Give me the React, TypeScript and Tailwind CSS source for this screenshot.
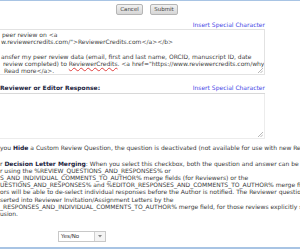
import React from "react";

const font = { fontFamily: '"DejaVu Sans", Verdana, sans-serif' };

export default function App() {
  return (
    <div
      className="w-[300px] h-[250px] overflow-hidden bg-white relative text-[6px] leading-[7.2px] text-[#3a3a3a]"
      style={font}
    >
      <div className="h-[1px] bg-[#a8c4e4]" />
      {/* buttons */}
      <div className="flex gap-[7px] pl-[116px] pt-[3px]">
        <button className="w-[27px] h-[11px] rounded-[2px] border border-[#b5b5b5] bg-gradient-to-b from-[#f2f2f2] to-[#d6d6d6] text-[5.5px] leading-[9px] text-[#444]">
          Cancel
        </button>
        <button className="w-[28px] h-[11px] rounded-[2px] border border-[#b5b5b5] bg-gradient-to-b from-[#f2f2f2] to-[#d6d6d6] text-[5.5px] leading-[9px] text-[#444]">
          Submit
        </button>
      </div>
      {/* link */}
      <div className="w-[265px] flex justify-end pt-[6px] h-[14px] text-[#4646e6]">
        <span>Insert Special Character</span>
      </div>
      {/* textarea 1 */}
      <div className="-ml-[3px] w-[268px] h-[46px] border border-[#e2e2e2] bg-white relative pl-[3px] pt-[1px] whitespace-nowrap overflow-hidden text-[#404040]">
        <div className="pl-[1px]">peer review on &lt;a</div>
        <div>w.reviewercredits.com/"&gt;ReviewerCredits.com&lt;/a&gt;&lt;/b&gt;</div>
        <div>&nbsp;</div>
        <div>ansfer my peer review data (email, first and last name, ORCID, manuscript ID, date</div>
        <div className="pl-[2px]">
          review completed) to{" "}
          <span className="underline decoration-wavy decoration-[#e04040] decoration-[0.7px]">ReviewerCredits</span>. &lt;a href="https://www.reviewercredits.com/why-
        </div>
        <div className="pl-[3px]">Read more&lt;/a&gt;.</div>
        <Grip />
      </div>
      {/* label row */}
      <div className="w-[265px] flex justify-between items-end pt-[9px] pb-[2px] border-b border-[#d8d8d8]">
        <span className="font-bold text-[#1c2440]">Reviewer or Editor Response:</span>
        <span className="text-[#4646e6]">Insert Special Character</span>
      </div>
      {/* textarea 2 */}
      <div className="-ml-[3px] w-[268px] h-[45px] border-r border-b border-[#ececec] bg-white relative">
        <Grip />
      </div>
      {/* notes */}
      <div className="pt-[5px] whitespace-nowrap">
        <div>
          you <b className="text-[#1c2440]">Hide</b> a Custom Review Question, the question is deactivated (not available for use with new Reviewer
        </div>
        <div>&nbsp;</div>
        <div className="pt-[1px]">
          r <b className="text-[#1c2440]">Decision Letter Merging</b>: When you select this checkbox, both the question and answer can be merged
        </div>
        <div>r using the %REVIEW_QUESTIONS_AND_RESPONSES% or</div>
        <div>S_AND_INDIVIDUAL_COMMENTS_TO_AUTHOR% merge fields (for Reviewers) or the</div>
        <div>UESTIONS_AND_RESPONSES% and %EDITOR_RESPONSES_AND_COMMENTS_TO_AUTHOR% merge fields</div>
        <div>ors will be able to de-select individual responses before the Author is notified. The Reviewer questions</div>
        <div>serted into Reviewer Invitation/Assignment Letters by the</div>
        <div>_RESPONSES_AND_INDIVIDUAL_COMMENTS_TO_AUTHOR% merge field, for those reviews explicitly selected</div>
        <div>usion.</div>
      </div>
      {/* select */}
      <div className="pl-[58px] pt-[14px]">
        <div className="w-[48px] h-[11px] border border-[#c8c8c8] flex bg-white">
          <div className="flex-1 pl-[2px] text-[5.5px] leading-[9px] text-[#333]">Yes/No</div>
          <div className="w-[11px] border-l border-[#d0d0d0] bg-[#f4f4f4] flex items-center justify-center">
            <svg width="4" height="3" viewBox="0 0 4 3">
              <path d="M0 0 L4 0 L2 2.5 Z" fill="#888" />
            </svg>
          </div>
        </div>
      </div>
      <div className="absolute left-0 right-0 top-[247px] h-[2px] bg-[#a8c4e4]" />
    </div>
  );
}

function Grip() {
  return (
    <svg className="absolute right-[1px] bottom-[1px]" width="5" height="5" viewBox="0 0 5 5">
      <path d="M5 0 L0 5 M5 2.5 L2.5 5" stroke="#9a9a9a" strokeWidth="0.7" />
    </svg>
  );
}
